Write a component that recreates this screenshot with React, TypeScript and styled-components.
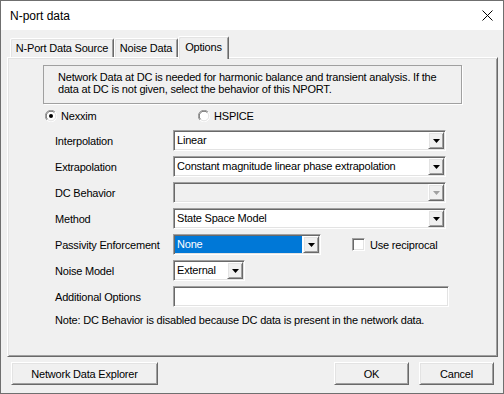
import React from "react";
import styled, { createGlobalStyle, css } from "styled-components";

const GlobalStyle = createGlobalStyle`
  html, body { margin: 0; padding: 0; background: #fff; }
  body {
    font-family: "Liberation Sans", Arial, sans-serif;
    font-size: 11px;
    letter-spacing: -0.2px;
    color: #000;
  }
  * { box-sizing: border-box; }
`

const raised = css`
  border: 1px solid;
  border-color: #ffffff #696969 #696969 #ffffff;
  box-shadow: inset 1px 1px 0 #e3e3e3, inset -1px -1px 0 #a0a0a0;
`
const sunken = css`
  border: 1px solid;
  border-color: #a0a0a0 #ffffff #ffffff #a0a0a0;
  box-shadow: inset 1px 1px 0 #696969, inset -1px -1px 0 #e3e3e3;
`

const Window = styled.div`
  width: 504px;
  height: 394px;
  border: 1px solid #6f6f6f;
  background: #f0f0f0;
  display: flex;
  flex-direction: column;
`
const TitleBar = styled.div`
  height: 29px;
  background: #fff;
  display: flex;
  align-items: center;
  justify-content: space-between;
  padding: 0 10px 0 9px;
  font-size: 12px;
  letter-spacing: 0;
`
const Body = styled.div`
  flex: 1;
  display: flex;
  flex-direction: column;
  padding: 6px 5px 0 6px;
`
const TabStrip = styled.div`
  display: flex;
  align-items: flex-end;
  height: 21px;
  padding-left: 3px;
`
const Tab = styled.div<{ $active?: boolean; $w: number }>`
  position: relative;
  z-index: ${(p) => (p.$active ? 1 : 0)};
  width: ${(p) => p.$w}px;
  height: ${(p) => (p.$active ? 23 : 19)}px;
  margin-bottom: ${(p) => (p.$active ? -2 : 0)}px;
  padding-bottom: ${(p) => (p.$active ? 3 : 0)}px;
  display: flex;
  align-items: center;
  justify-content: center;
  background: #f0f0f0;
  border: 1px solid;
  border-bottom: none;
  border-color: #fff #696969 transparent #fff;
  border-radius: 2px 2px 0 0;
  box-shadow: inset 1px 1px 0 #e3e3e3, inset -1px 0 0 #a0a0a0;
`
const TabPanel = styled.div`
  height: 300px;
  ${raised};
  background: #f0f0f0;
  padding: 7px 0 0 35px;
  display: flex;
  flex-direction: column;
`
const InfoBox = styled.div`
  width: 419px;
  height: 39px;
  border: 1px solid #a0a0a0;
  box-shadow: 1px 1px 0 #fff;
  padding: 5px 0 0 14px;
  line-height: 12px;
`
const RadioRow = styled.div`
  display: flex;
  align-items: center;
  height: 13px;
  margin: 5px 0 0 2px;
`
const RadioOption = styled.label<{ $w?: number }>`
  display: flex;
  align-items: center;
  gap: 4px;
  width: ${(p) => (p.$w ? `${p.$w}px` : "auto")};
`
const Form = styled.div`
  display: grid;
  grid-template-columns: 118px auto;
  grid-auto-rows: 21px;
  row-gap: 5px;
  align-items: center;
  margin: 8px 0 0 12px;
`
const Field = styled.div`
  display: flex;
  align-items: center;
`
const Combo = styled.div<{ $w: number; $disabled?: boolean }>`
  width: ${(p) => p.$w}px;
  height: 21px;
  ${sunken};
  background: ${(p) => (p.$disabled ? "#f0f0f0" : "#fff")};
  display: flex;
`
const ComboText = styled.div<{ $selected?: boolean }>`
  flex: 1;
  margin: 1px 0 1px 1px;
  padding-left: 2px;
  line-height: 17px;
  white-space: nowrap;
  overflow: hidden;
  background: ${(p) => (p.$selected ? "#0078d7" : "transparent")};
  color: ${(p) => (p.$selected ? "#fff" : "#000")};
`
const ArrowButton = styled.div`
  width: 16px;
  height: 17px;
  margin: 1px;
  ${raised};
  background: #f0f0f0;
  display: flex;
  align-items: center;
  justify-content: center;
`
const TextBox = styled.div<{ $w: number }>`
  width: ${(p) => p.$w}px;
  height: 21px;
  ${sunken};
  background: #fff;
`
const CheckOption = styled.label`
  display: flex;
  align-items: center;
  gap: 5px;
  margin-left: 31px;
`
const CheckBox = styled.div`
  width: 13px;
  height: 13px;
  ${sunken};
  background: #fff;
`
const Note = styled.div`
  margin: 7px 0 0 12px;
  line-height: 13px;
`
const ButtonRow = styled.div`
  display: flex;
  align-items: center;
  margin-top: 5px;
  padding: 0 4px;
  gap: 10px;
`
const Button = styled.div<{ $w: number }>`
  width: ${(p) => p.$w}px;
  height: 23px;
  ${raised};
  background: #f0f0f0;
  display: flex;
  align-items: center;
  justify-content: center;
`
const Spacer = styled.div`
  flex: 1;
`

const CloseIcon = () => (
  <svg width="11" height="11" viewBox="0 0 11 11">
    <path d="M0.5 0.5 L10.5 10.5 M10.5 0.5 L0.5 10.5" stroke="#000" strokeWidth="1" />
  </svg>
)

const Arrow = ({ disabled }: { disabled?: boolean }) => (
  <svg width="7" height="4" viewBox="0 0 7 4">
    <polygon points="0,0 7,0 3.5,4" fill={disabled ? "#a0a0a0" : "#000"} />
  </svg>
)

const Radio = ({ checked }: { checked?: boolean }) => (
  <svg width="12" height="12" viewBox="0 0 12 12">
    <circle cx="6" cy="6" r="5.5" fill="#fff" />
    <path d="M1.9 10.1 A5.5 5.5 0 0 1 10.1 1.9" stroke="#a0a0a0" fill="none" />
    <path d="M10.1 1.9 A5.5 5.5 0 0 1 1.9 10.1" stroke="#fff" fill="none" />
    <path d="M2.6 9.4 A4.5 4.5 0 0 1 9.4 2.6" stroke="#696969" fill="none" />
    <path d="M9.4 2.6 A4.5 4.5 0 0 1 2.6 9.4" stroke="#e3e3e3" fill="none" />
    {checked && <circle cx="6" cy="6" r="2" fill="#000" />}
  </svg>
)

type ComboProps = { w: number; value?: string; disabled?: boolean; selected?: boolean }

const ComboBox = ({ w, value, disabled, selected }: ComboProps) => (
  <Combo $w={w} $disabled={disabled}>
    <ComboText $selected={selected}>{value}</ComboText>
    <ArrowButton>
      <Arrow disabled={disabled} />
    </ArrowButton>
  </Combo>
)

export default function App() {
  return (
    <Window>
      <GlobalStyle />
      <TitleBar>
        <span>N-port data</span>
        <CloseIcon />
      </TitleBar>
      <Body>
        <TabStrip>
          <Tab $w={104}>N-Port Data Source</Tab>
          <Tab $w={64}>Noise Data</Tab>
          <Tab $w={51} $active>Options</Tab>
        </TabStrip>
        <TabPanel>
          <InfoBox>
            Network Data at DC is needed for harmonic balance and transient analysis. If the
            <br />
            data at DC is not given, select the behavior of this NPORT.
          </InfoBox>
          <RadioRow>
            <RadioOption $w={153}>
              <Radio checked />
              Nexxim
            </RadioOption>
            <RadioOption>
              <Radio />
              HSPICE
            </RadioOption>
          </RadioRow>
          <Form>
            <span>Interpolation</span>
            <ComboBox w={273} value="Linear" />
            <span>Extrapolation</span>
            <ComboBox w={273} value="Constant magnitude linear phase extrapolation" />
            <span>DC Behavior</span>
            <ComboBox w={273} disabled />
            <span>Method</span>
            <ComboBox w={273} value="State Space Model" />
            <span>Passivity Enforcement</span>
            <Field>
              <ComboBox w={148} value="None" selected />
              <CheckOption>
                <CheckBox />
                Use reciprocal
              </CheckOption>
            </Field>
            <span>Noise Model</span>
            <ComboBox w={72} value="External" />
            <span>Additional Options</span>
            <TextBox $w={276} />
          </Form>
          <Note>Note: DC Behavior is disabled because DC data is present in the network data.</Note>
        </TabPanel>
        <ButtonRow>
          <Button $w={147}>Network Data Explorer</Button>
          <Spacer />
          <Button $w={75}>OK</Button>
          <Button $w={75}>Cancel</Button>
        </ButtonRow>
      </Body>
    </Window>
  );
}
